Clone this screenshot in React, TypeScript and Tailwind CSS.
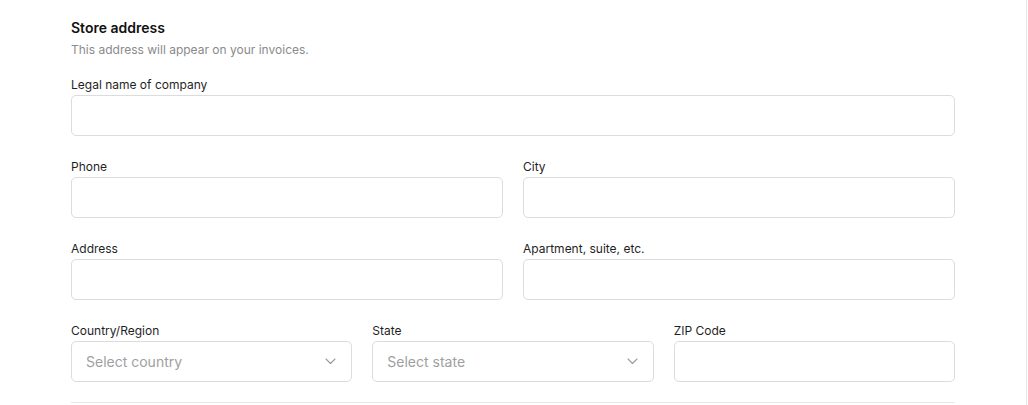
import React from "react";

function Chevron() {
  return (
    <svg width="11" height="7" viewBox="0 0 11 7" fill="none" className="shrink-0">
      <path d="M1 1 L5.5 5.5 L10 1" stroke="#9a9a9a" strokeWidth="1.1" strokeLinecap="round" strokeLinejoin="round" />
    </svg>
  );
}

function Field({ label, select, placeholder }: { label: string; select?: boolean; placeholder?: string }) {
  return (
    <div className="flex flex-col">
      <label className="text-xs leading-4 text-[#1f1f1f] mb-[2px]">{label}</label>
      {select ? (
        <div className="h-[41px] rounded-[5px] border border-[#dcdcdc] bg-white flex items-center justify-between pl-[14px] pr-[15px]">
          <span className="text-sm text-[#a0a0a0]">{placeholder}</span>
          <Chevron />
        </div>
      ) : (
        <div className="h-[41px] rounded-[5px] border border-[#dcdcdc] bg-white" />
      )}
    </div>
  );
}

export default function App() {
  return (
    <div
      className="w-[1027px] h-[405px] overflow-hidden bg-white border-r border-[#e6e6e6] px-[71px] pt-[18px]"
      style={{ fontFamily: "Inter, 'Liberation Sans', sans-serif" }}
    >
      <h2 className="text-sm leading-5 font-semibold text-[#111111]">Store address</h2>
      <p className="mt-1 text-xs leading-4 text-[#8a8a8a]">This address will appear on your invoices.</p>
      <div className="mt-[19px] flex flex-col gap-[23px]">
        <Field label="Legal name of company" />
        <div className="grid grid-cols-2 gap-5">
          <Field label="Phone" />
          <Field label="City" />
        </div>
        <div className="grid grid-cols-2 gap-5">
          <Field label="Address" />
          <Field label="Apartment, suite, etc." />
        </div>
        <div className="grid grid-cols-3 gap-5">
          <Field label="Country/Region" select placeholder="Select country" />
          <Field label="State" select placeholder="Select state" />
          <Field label="ZIP Code" />
        </div>
      </div>
      <div className="mt-[20px] border-t border-[#e8e8e8]" />
    </div>
  );
}
